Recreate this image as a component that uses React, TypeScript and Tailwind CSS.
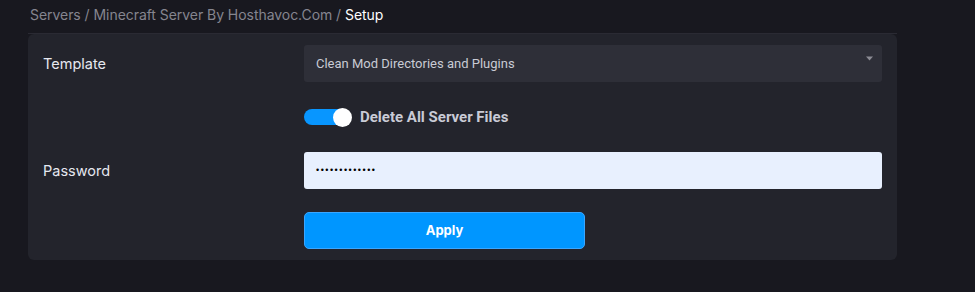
import React from "react";

export default function App() {
  return (
    <div className="w-[975px] h-[292px] bg-[#18181f] overflow-hidden" style={{ fontFamily: "Inter, 'Noto Sans', sans-serif" }}>
      <div className="pl-[30px] pt-[5px] h-[33px] text-[14px] leading-[20px] tracking-[-0.05px]">
        <span className="text-[#85858f]">Servers / Minecraft Server By Hosthavoc.Com / </span>
        <span className="text-white">Setup</span>
      </div>
      <div className="ml-[28px] w-[869px]">
        <div className="h-[1px] bg-[#2a2a33]" />
        <div className="h-[226px] bg-[#23242c] rounded-[6px] px-[15px] pt-[11px]">
          <div className="flex items-center h-[37px]">
            <div className="w-[261px] text-[14.5px] text-[#e6e8f0]">Template</div>
            <div className="relative flex-1 h-[37px] bg-[#2e2f38] rounded-[3px] flex items-center pl-[12px] text-[13px] text-[#c9cbd4]" style={{ fontFamily: "Roboto, sans-serif" }}>
              Clean Mod Directories and Plugins
              <svg className="absolute right-[9px] top-[11px]" width="7" height="5" viewBox="0 0 7 5">
                <path d="M0 0.5 H7 L3.5 4.5 Z" fill="#8c8c94" />
              </svg>
            </div>
          </div>
          <div className="flex items-center h-[22px] mt-[24px]">
            <div className="w-[261px]" />
            <div className="flex items-center">
              <div className="relative w-[48px] h-[20px]">
                <div className="absolute left-0 top-[2px] w-[44px] h-[16px] rounded-full bg-[#0896ff]" />
                <div className="absolute left-[29px] top-[1px] w-[19px] h-[19px] rounded-full bg-white" />
              </div>
              <span className="ml-[8px] text-[15px] font-bold text-[#c9cbd6]" style={{ fontFamily: "Roboto, sans-serif" }}>Delete All Server Files</span>
            </div>
          </div>
          <div className="flex items-center h-[37px] mt-[24px]">
            <div className="w-[261px] text-[14.5px] text-[#e6e8f0]">Password</div>
            <div className="flex-1 h-[37px] bg-[#e8f0fe] rounded-[3px] flex items-center pl-[12px] text-[9px] text-black tracking-[1.5px]" style={{ fontFamily: "'Liberation Sans', sans-serif" }}>
              •••••••••••••
            </div>
          </div>
          <div className="flex h-[37px] mt-[23px]">
            <div className="w-[261px]" />
            <button className="w-[281px] h-[37px] rounded-[5px] bg-[#0096ff] border border-[#3aa6ff] text-white text-[13px] font-bold leading-[16px] pb-[2px]">
              Apply
            </button>
          </div>
        </div>
      </div>
    </div>
  );
}
